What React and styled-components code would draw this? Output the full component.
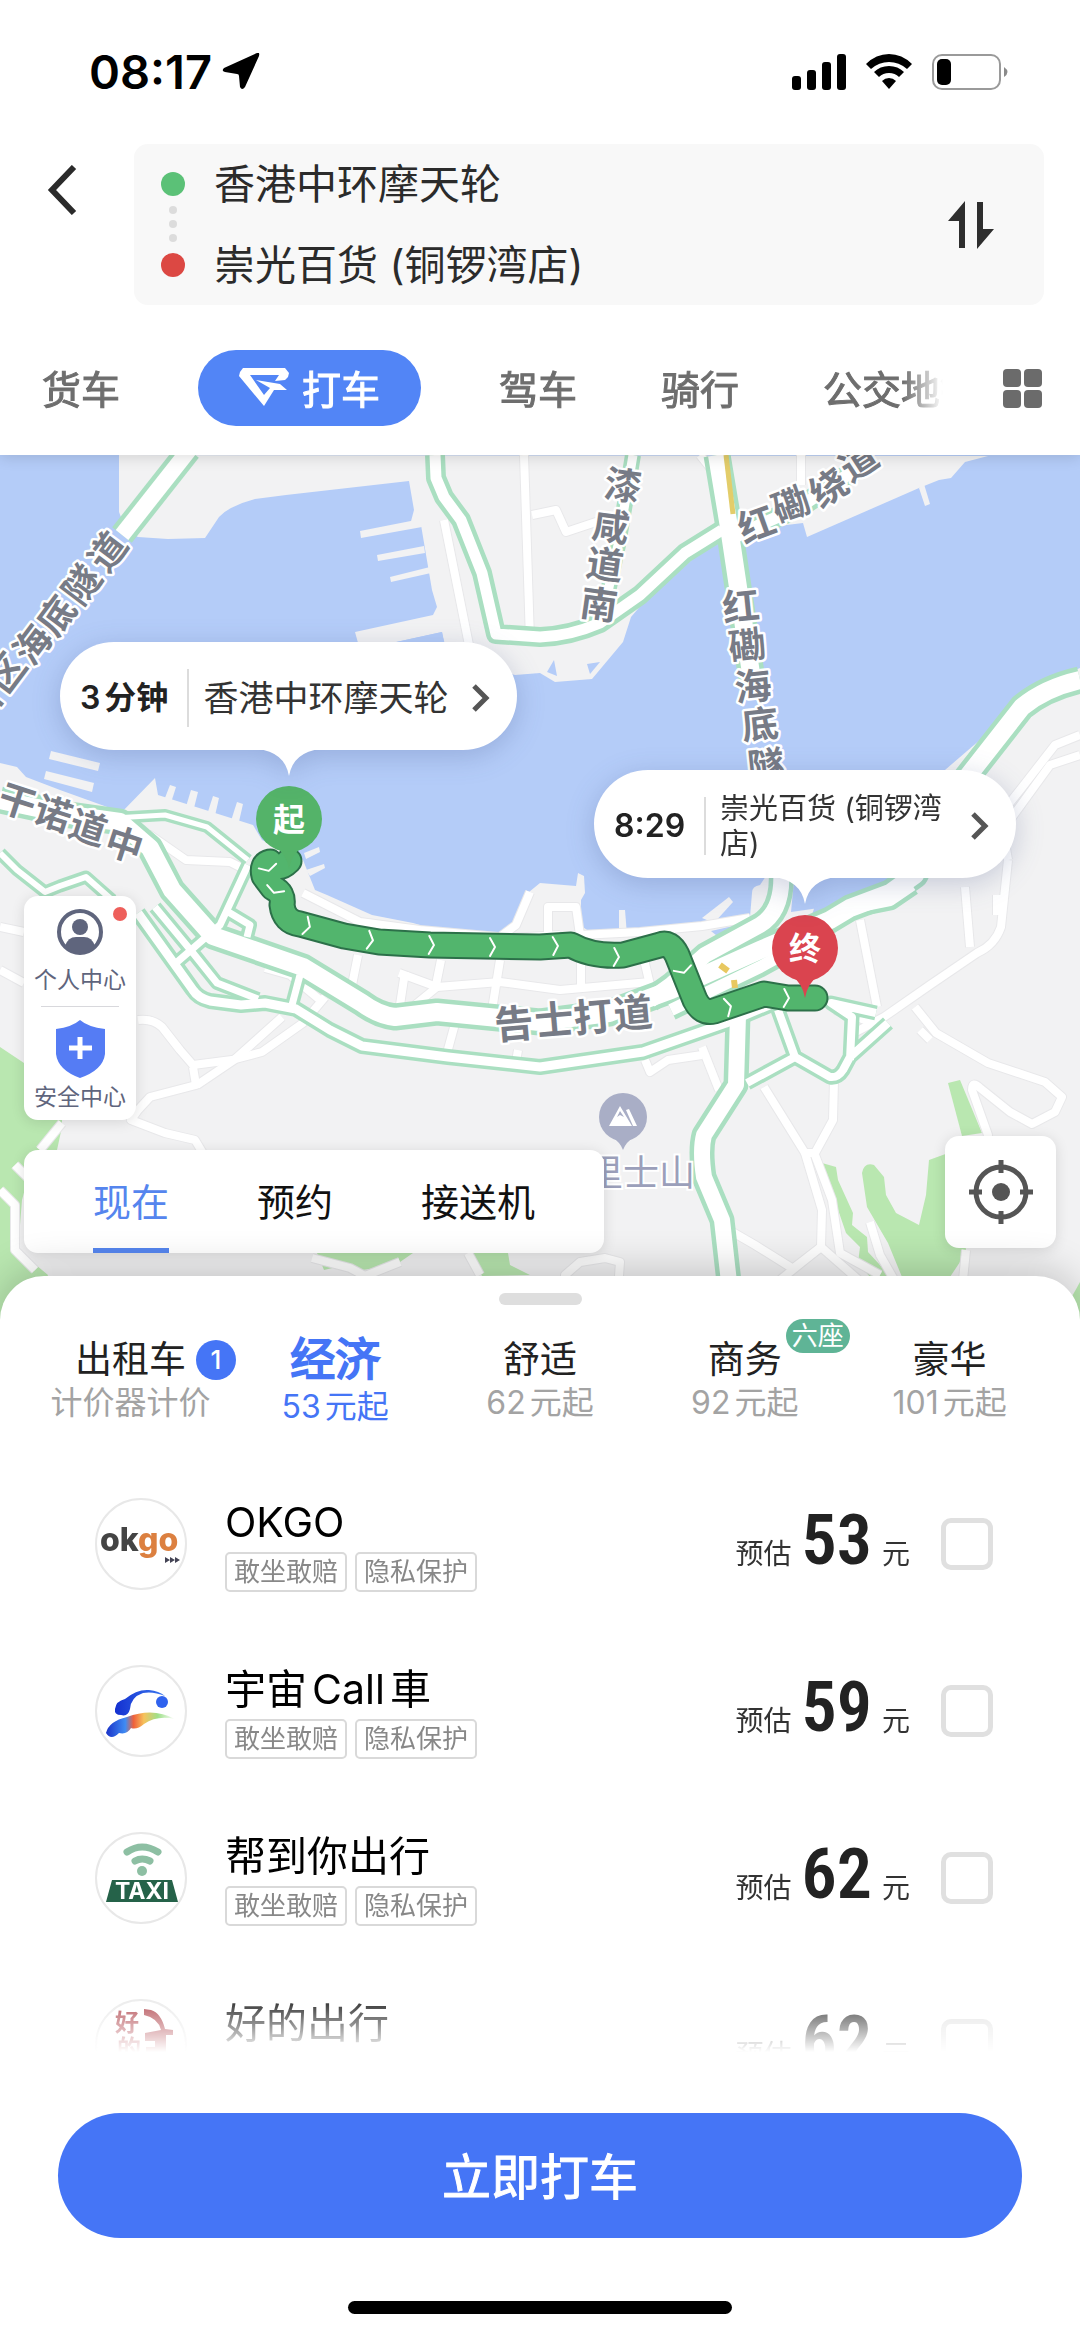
import React, { useState } from 'react'
import styled, { createGlobalStyle } from 'styled-components'

const GlobalStyle = createGlobalStyle`
    * {
        box-sizing : border-box;
    }
    body {
        margin : 0;
        background : #fff;
        font-family : Inter, "Noto Sans CJK SC", sans-serif;
        color : #222;
        text-autospace : normal;
    }
    button {
        border : none;
        background : none;
        padding : 0;
        margin : 0;
        font : inherit;
        color : inherit;
        cursor : pointer;
    }
    svg {
        display : block;
        flex : none;
    }
`

const Page = styled.div`
    min-height : 100vh;
    display : flex;
    flex-direction : column;
    overflow : hidden;
`

/* ---------- 顶部 ---------- */
const Header = styled.header`
    position : relative;
    z-index : 2;
    background : #fff;
    box-shadow : 0 2px 14px rgba(0, 0, 0, 0.14);
`

const StatusBar = styled.div`
    height : 144px;
    padding : 0 72px 0 89px;
    display : flex;
    align-items : center;
    justify-content : space-between;
`

const StatusGroup = styled.div`
    display : flex;
    align-items : center;
    gap : ${(props) => props.$gap}px;
`

const Clock = styled.span`
    font-size : 47px;
    font-weight : 600;
    line-height : 56px;
    color : #000;
`

const SearchRow = styled.div`
    display : flex;
    align-items : flex-start;
    padding : 0 36px 0 40px;
`

const BackButton = styled.button`
    width : 94px;
    height : 92px;
    padding-left : 6px;
    display : flex;
    align-items : center;
`

const SearchBox = styled.div`
    flex : 1;
    display : flex;
    align-items : center;
    background : #f8f8f8;
    border-radius : 14px;
    padding : 0 50px 0 27px;
`

const Stops = styled.div`
    flex : 1;
`

const Stop = styled.div`
    display : flex;
    align-items : center;
    gap : 29px;
    height : 80px;
    font-size : 41px;
    color : #2b2b2b;
`

const StopName = styled.span`
    padding-bottom : 6px;
`

const StopDot = styled.span`
    width : 24px;
    height : 24px;
    border-radius : 50%;
    background : ${(props) => props.$color};
`

const StopGap = styled.div`
    position : relative;
    height : 1px;
    svg {
        position : absolute;
        left : 7px;
        top : -19px;
    }
`

const ModeBar = styled.nav`
    display : flex;
    align-items : center;
    height : 150px;
    padding : 16px 38px 0 36px;
`

const ModeList = styled.div`
    flex : 1;
    display : flex;
    align-items : center;
    gap : 72px;
    overflow : hidden;
    margin-right : 60px;
    mask-image : linear-gradient(to right, #000 calc(100% - 40px), transparent);
`

const Mode = styled.button`
    && {
        flex : none;
        display : flex;
        align-items : center;
        gap : 13px;
        height : 76px;
        padding : 0 ${(props) => (props.$active ? 41 : 6)}px 2px;
        border-radius : 38px;
        font-size : 39px;
        white-space : nowrap;
        color : ${(props) => (props.$active ? '#fff' : '#6e6e6e')};
        background : ${(props) => (props.$active ? '#5285f6' : 'transparent')};
        -webkit-text-stroke : 1px currentColor;
    }
`

/* ---------- 地图 ---------- */
const MapArea = styled.section`
    position : relative;
    height : 866px;
    background : #b4ccf8;
`

const MapSvg = styled.svg`
    position : absolute;
    inset : 0;
    width : 100%;
    height : 100%;
`

const Callout = styled.button`
    && {
        position : absolute;
        left : ${(props) => props.$x}px;
        top : ${(props) => props.$y}px;
        width : ${(props) => props.$w}px;
        height : 108px;
        padding : 4px 26px 0 20px;
        display : flex;
        align-items : center;
        border-radius : 54px;
        background : #fff;
        text-align : left;
        filter : drop-shadow(0 6px 14px rgba(40, 60, 120, 0.22));
    }
`

const CalloutTail = styled.svg`
    position : absolute;
    top : 107px;
    left : ${(props) => props.$left}px;
`

const Eta = styled.span`
    flex : none;
    padding-right : 19px;
    border-right : 2px solid #dcdcdc;
    line-height : 58px;
    font-size : 32px;
    font-weight : 600;
    color : #222;
`

const PlaceName = styled.span`
    flex : 1;
    padding-left : 14px;
    font-size : ${(props) => (props.$small ? 29 : 35)}px;
    line-height : 35px;
    color : #333;
`

const FloatCard = styled.div`
    position : absolute;
    background : #fff;
    border-radius : 14px;
    box-shadow : 0 2px 14px rgba(0, 0, 0, 0.12);
`

const SideCard = styled(FloatCard)`
    left : 24px;
    top : 441px;
    width : 112px;
    padding : 12px 0 6px;
`

const SideItem = styled.button`
    position : relative;
    width : 100%;
    display : flex;
    flex-direction : column;
    align-items : center;
    gap : ${(props) => props.$gap}px;
    && {
        font-size : 23px;
        line-height : 34px;
        color : #5f657d;
    }
`

const SideLine = styled.div`
    height : 1px;
    margin : 9px 17px 13px;
    background : #d8d8dc;
`

const RedDot = styled.span`
    position : absolute;
    top : -1px;
    right : 9px;
    width : 14px;
    height : 14px;
    border-radius : 50%;
    background : #ee5f5b;
`

const TimeCard = styled(FloatCard)`
    left : 24px;
    top : 695px;
    display : flex;
    gap : 88px;
    padding : 0 69px;
`

const TimeTab = styled.button`
    && {
        height : 103px;
        font-size : 38px;
        color : ${(props) => (props.$active ? '#5585ee' : '#111')};
        border-bottom : 5px solid ${(props) => (props.$active ? '#5585ee' : 'transparent')};
    }
`

const LocateButton = styled.button`
    && {
        position : absolute;
        right : 24px;
        top : 681px;
        width : 111px;
        height : 112px;
        display : flex;
        align-items : center;
        justify-content : center;
        background : #fff;
        border-radius : 14px;
        box-shadow : 0 2px 14px rgba(0, 0, 0, 0.12);
    }
`

/* ---------- 车型面板 ---------- */
const Sheet = styled.main`
    position : relative;
    z-index : 1;
    flex : 1;
    display : flex;
    flex-direction : column;
    margin-top : -45px;
    padding-top : 17px;
    background : #fff;
    border-radius : 44px 44px 0 0;
    box-shadow : 0 -6px 40px rgba(0, 0, 0, 0.2);
`

const Handle = styled.div`
    align-self : center;
    width : 83px;
    height : 12px;
    border-radius : 6px;
    background : #dedede;
`

const ClassBar = styled.nav`
    display : grid;
    grid-template-columns : repeat(5, 1fr);
    align-items : center;
    margin-top : 26px;
    padding : 0 28px;
`

const ClassTab = styled.button`
    display : flex;
    flex-direction : column;
    align-items : center;
    && {
        color : ${(props) => (props.$active ? '#4575f6' : '#222')};
    }
`

const ClassName = styled.span`
    position : relative;
    font-size : ${(props) => (props.$active ? 45 : 37)}px;
    line-height : ${(props) => (props.$active ? 58 : 50)}px;
    -webkit-text-stroke : ${(props) => (props.$active ? '2px currentColor' : '0')};
`

const ClassPrice = styled.span`
    font-size : 32px;
    line-height : 36px;
    color : ${(props) => (props.$active ? '#4575f6' : '#a3a3a3')};
`

const CountBadge = styled.span`
    position : absolute;
    left : 100%;
    top : 5px;
    margin-left : 10px;
    width : 40px;
    height : 40px;
    border-radius : 50%;
    background : #4575f6;
    color : #fff;
    font-size : 26px;
    font-weight : 500;
    line-height : 40px;
    text-align : center;
`

const SeatBadge = styled.span`
    position : absolute;
    left : 100%;
    top : -16px;
    margin-left : 4px;
    padding : 0 6px;
    border-radius : 17px;
    background : #5fb496;
    color : #fff;
    font-size : 26px;
    line-height : 34px;
    white-space : nowrap;
`

const CarList = styled.ul`
    list-style : none;
    margin : 35px 0 0;
    padding : 0;
    height : 592px;
    overflow : hidden;
    mask-image : linear-gradient(#000 calc(100% - 64px), transparent);
`

const CarRow = styled.li`
    label {
        display : flex;
        align-items : center;
        height : 167px;
        padding : 0 87px 0 95px;
    }
`

const Logo = styled.span`
    flex : none;
    width : 92px;
    height : 92px;
    border : 2px solid #e8e8e8;
    border-radius : 50%;
    overflow : hidden;
`

const CarInfo = styled.span`
    flex : 1;
    display : flex;
    flex-direction : column;
    padding-left : 38px;
`

const CarName = styled.span`
    margin-bottom : 4px;
    font-size : 41px;
    line-height : 52px;
    color : #000;
`

const TagLine = styled.span`
    display : flex;
    gap : 8px;
`

const Tag = styled.span`
    height : 40px;
    padding : 0 7px;
    border : 2px solid #d9d9d9;
    border-radius : 5px;
    font-size : 26px;
    line-height : 35px;
    color : #888;
`

const Price = styled.span`
    display : flex;
    align-items : baseline;
    padding-bottom : 8px;
    font-size : 28px;
    color : #333;
`

const Amount = styled.span`
    margin : 0 10px;
    font-family : "Roboto Condensed", Roboto, sans-serif;
    font-size : 70px;
    line-height : 84px;
    font-weight : 600;
    color : #222;
`

const Check = styled.input`
    appearance : none;
    flex : none;
    width : 52px;
    height : 52px;
    margin : 0 0 0 31px;
    border : 5px solid #e0e0e0;
    border-radius : 10px;
    background : #fff;
    &:checked {
        background : #4575f6;
        border-color : #4575f6;
    }
`

const SubmitButton = styled.button`
    && {
        height : 125px;
        margin : 61px 58px 63px;
        padding-bottom : 4px;
        border-radius : 63px;
        background : #4575f6;
        color : #fff;
        font-size : 49px;
        -webkit-text-stroke : 1px currentColor;
    }
`

const HomeBar = styled.div`
    align-self : center;
    width : 384px;
    height : 13px;
    margin-bottom : 23px;
    border-radius : 7px;
    background : #000;
`

/* ---------- 地图数据 ---------- */
const LAND = [
    // 九龙
    'M119 455V512L126 530 138 537 168 539 205 538 219 517Q225 511 231 508 243 502 255 499L286 495 409 481 414 510 410 525 421 525 432 590 437 607 433 615 355 632 360 650 442 632 446 655 515 675 540 673 555 682 592 679 623 642 631 617 643 603 722 533 803 523 807 537 919 488 939 480 951 478 965 462 988 456Z',
    // 港岛
    'M0 763L17 767 26 777 60 790 110 808 119 815 155 778 158 795 253 825 262 840 303 860 315 890 327 895 372 915 413 923 444 932 504 933 517 917 529 892 540 883 576 886 578 873 584 876 585 893 581 900 581 923Q583 929 590 931L619 930 702 923 750 917 752 893Q752 886 760 885L770 870 795 870 791 912 840 905 905 880 945 770 988 733 1036 687 1080 668V1330H0Z',
    // 码头
    'M360 531L421 519 422 527 361 538Z', 'M377 555L424 546 425 553 378 561Z', 'M390 577L430 567 431 573 391 582Z',
    'M51 751L100 763 98 771 49 759Z', 'M46 771L94 783 92 792 44 779Z',
    'M170 785L176 787 170 806 163 803Z', 'M191 790L198 792 193 812 185 810Z', 'M213 796L219 798 214 820 206 818Z', 'M237 802L243 804 238 826 230 824Z',
    'M304 853L319 847 320 852 306 859Z', 'M306 870L324 864 325 868 310 876Z',
    'M919 488L925 506 930 504 924 484Z',
    'M702 918L729 897 733 902 714 923Z', 'M619 910H625L627 935H619Z',
]

const WATER = ['M396 642L442 632 445 645Z', 'M547 672L554 660 557 676Z', 'M587 664L600 662 590 674Z', 'M711 931L742 924 746 931 722 940Z', 'M820 890L838 880H905L890 888 860 895 835 910 812 915Z']

const PARKS = [
    'M0 1047L24 1063 62 1100 62 1127 57 1150 30 1170 22 1200 18 1250 48 1275 30 1330H0Z',
    'M948 1083L960 1080 982 1133 962 1136Z',
    'M862 1173Q864 1162 874 1165L884 1177 886 1195 896 1213 919 1225 926 1195 929 1160 962 1148 966 1253 950 1277H902L888 1243 867 1207Z',
    'M822 1163L836 1167 838 1180 853 1213 852 1225 867 1237 868 1252 891 1277H870L858 1263 860 1247 846 1233Z',
    'M317 1253H413L400 1262 377 1268 362 1270 345 1265 324 1270Z',
    'M472 1253H508L510 1265 530 1275 482 1276Z',
    'M1080 1282L1070 1300 1080 1330Z',
]

const LANES = [
    'M0 927L24 932', 'M0 970L24 983', 'M114 840L150 835 186 860 230 862 262 878',
    'M138 1020Q152 1018 162 1027L180 1050 193 1065 232 1060 262 1052 303 1023 325 997',
    'M193 1067L196 1085 150 1097 138 1110 131 1120 165 1133 195 1140 204 1155',
    'M197 1085L234 1060 282 1017', 'M303 893L360 922 420 930 510 938 560 935', 'M530 892L516 925 500 937',
    'M358 955L352 985', 'M441 960L435 990', 'M399 973L437 987 500 982 560 990 650 982', 'M405 972L400 1005', 'M437 987L415 1005',
    'M548 935V907H576L580 935 640 932 702 926 750 918', 'M500 960L492 1010', 'M581 960V985', 'M643 955L650 985', 'M456 1020L447 1053', 'M518 1050L515 1068',
    'M444 520L470 650', 'M524 455L530 640', 'M532 515L556 510 566 532 602 520', 'M801 455V485', 'M700 455L712 470',
    'M1008 860L1001 927Q995 945 977 953L930 985 884 1017 850 1035', 'M965 887L970 947', 'M997 895V915', 'M860 920L877 1007',
    'M915 1007L936 1033 988 1063 1045 1082 1062 1097 1055 1112 1032 1124 1010 1112 980 1088Q972 1080 972 1090L988 1135 975 1200',
    'M930 1040L920 1030', 'M764 1087L805 1153H815L833 1120 834 1080', 'M805 1153L822 1210 821 1247 795 1267', 'M815 1155L832 1200 840 1253 880 1275',
    'M729 1230L755 1245 795 1270', 'M702 1047L719 1090', 'M702 1055L668 1060 650 1072 645 1060', 'M821 1247L870 1290', 'M780 1280L821 1247',
    'M870 1222L880 1255 900 1290', 'M966 1250L962 1290',
    'M312 1258L350 1268 365 1276 400 1262', 'M468 1253L480 1275', 'M565 1290V1275L580 1262 605 1258 620 1262 618 1290',
    'M1080 735L1055 745 1020 790 1000 815 1008 860', 'M1080 755L1050 765 1010 820', 'M62 1123L40 1150', 'M0 1190L15 1205V1250L35 1270',
    'M15 1165L30 1180', 'M835 1010L880 1025', 'M265 968L290 975 320 1000',
]

const ROADS = [
    { w: 12, d: 'M0 853L17 870 45 892 60 886 86 877 112 900' },
    { w: 13, d: 'M155 907L193 953 217 983 258 999M176 963L220 925 248 865 M225 910L250 925 247 937' },
    { w: 13, d: 'M300 975L292 1005' },
    { w: 15, d: 'M138 913L193 990Q198 998 210 1001L241 1005 265 1003 296 1009 330 1030 362 1046 448 1057 540 1067 643 1052 726 1023 774 1003' },
    { w: 11, d: 'M114 818L165 815 207 827 248 860' },
    { w: 14, d: 'M747 1083L795 1057 778 1010M795 1057L830 1077Q838 1078 843 1070L850 1057 888 1023M850 1060L852 1017 831 1003 876 1013' },
    { w: 24, d: 'M738 1015L736 1085 704 1135Q700 1150 704 1177L722 1220 731 1300' },
    { w: 24, d: 'M781 870Q784 910 760 925L705 955 671 985 650 1000' },
    { w: 20, d: 'M671 1010L760 967 800 945 850 908 890 900 912 885' },
    { w: 26, d: 'M0 800L70 815 120 822 150 848 172 890 213 936 303 967 362 1003Q378 1015 395 1017L437 1012 540 1022 609 1013 671 990 760 950 830 920 850 908 890 893 915 875 957 790 1022 707Q1045 688 1080 680' },
    { w: 19, d: 'M435 455L436 478 444 497 461 520 482 573 496 634 540 637Q570 636 600 623L640 595 685 553 722 530' },
    { w: 15, d: 'M633 455L618 545 602 620' },
    { w: 20, d: 'M729 540L764 523 800 507 870 460' },
    { w: 26, d: 'M717 455L729 527 738 587 752 680' },
    { w: 24, d: 'M189 450L122 535' },
]

const ROUTE = 'M289 861Q278 872 270 862 261 864 264 876L273 888Q284 893 282 905 284 922 300 924L344 936 379 942 430 945 540 947 571 945Q592 957 623 955L660 945Q670 941 677 955L695 1000Q702 1014 714 1011L764 994 788 998H815'

const ARROWS = [
    [268, 868, 75], [275, 890, 110], [307, 926, 17], [370, 940, 8], [431, 945, 2], [492, 947, 0], [555, 946, -2], [616, 957, 2], [683, 970, 72], [728, 1007, -14], [786, 998, 2],
]

// 每个字单独定位，沿道路旋转
const ROAD_NAMES = [
    { angle: -53, size: 37, chars: [['西', -18, 706], ['区', 7, 673], ['海', 33, 645], ['底', 57, 616], ['隧', 82, 585], ['道', 108, 552]] },
    { angle: 18, size: 37, chars: [['干', 17, 802], ['诺', 53, 814], ['道', 88, 828], ['中', 124, 845]] },
    { angle: 8, size: 37, chars: [['漆', 623, 486], ['咸', 611, 527], ['道', 605, 565], ['南', 599, 605]] },
    { angle: -20, size: 37, chars: [['红', 757, 525], ['磡', 791, 505]] },
    { angle: -33, size: 37, chars: [['绕', 829, 488], ['道', 859, 462]] },
    { angle: -6, size: 37, chars: [['红', 741, 607], ['磡', 747, 646], ['海', 753, 687], ['底', 760, 725], ['隧', 766, 766]] },
    { angle: -5, size: 39, chars: [['告', 514, 1025], ['士', 554, 1021], ['打', 593, 1018], ['道', 633, 1014]] },
]

const MODES = ['货车', '打车', '驾车', '骑行', '公交地铁']
const TIMES = ['现在', '预约', '接送机']

const CLASSES = [
    { name: '出租车', price: '计价器计价', count: 1 },
    { name: '经济', price: '53元起' },
    { name: '舒适', price: '62元起' },
    { name: '商务', price: '92元起', seat: '六座' },
    { name: '豪华', price: '101元起' },
]

/* ---------- 标志 ---------- */
const OkgoLogo = () => (
    <svg width="88" height="88" viewBox="0 0 88 88">
        <text x="3" y="51" fontFamily="Inter, sans-serif" fontSize="32" fontWeight="800" fill="#444">ok<tspan fill="#dc8040">go</tspan></text>
        <path d="M68 57l5 3-5 3zM73 57l5 3-5 3zM78 57l5 3-5 3z" fill="#445" />
    </svg>
)

const CallLogo = () => (
    <svg width="88" height="88" viewBox="0 0 88 88">
        <defs>
            <linearGradient id="callTail" x1="0" x2="1">
                <stop offset="0" stopColor="#1a32c8" />
                <stop offset="0.28" stopColor="#3f8cf4" />
                <stop offset="0.4" stopColor="#f0603a" />
                <stop offset="0.55" stopColor="#f6c25c" />
                <stop offset="0.75" stopColor="#9fe08a" />
                <stop offset="1" stopColor="#fff" />
            </linearGradient>
            <linearGradient id="callArc" x1="0" x2="1">
                <stop offset="0" stopColor="#1430d0" />
                <stop offset="1" stopColor="#3a78f0" />
            </linearGradient>
        </defs>
        <path d="M18 42Q19 34 28 32 40 22 52 23 62 24 68 29 56 24 46 26 34 30 33 42 31 50 24 48 17 48 18 42Z" fill="url(#callArc)" />
        <circle cx="65" cy="35" r="6" fill="#2f62ee" />
        <path d="M9 66Q12 54 30 50 56 40 78 52 60 48 47 57 40 63 34 61 30 68 22 66 14 74 9 66Z" fill="url(#callTail)" />
    </svg>
)

const TaxiLogo = () => (
    <svg width="88" height="88" viewBox="0 0 88 88">
        <g fill="none" stroke="#8dbfa3" strokeLinecap="round" strokeWidth="7">
            <path d="M30 18Q45 8 61 18" />
            <path d="M38 27Q45 23 53 27" />
        </g>
        <circle cx="45" cy="37" r="5" fill="#8dbfa3" />
        <path d="M15 46H75L81 68H9Z" fill="#256249" />
        <text x="45" y="65" textAnchor="middle" fontFamily="Inter, sans-serif" fontSize="23" fontWeight="700" fill="#fff">TAXI</text>
    </svg>
)

const HaodeLogo = () => (
    <svg width="88" height="88" viewBox="0 0 88 88" fill="#a8323a">
        <text x="18" y="30" fontFamily="Noto Sans CJK SC, sans-serif" fontSize="24" fontWeight="700">好</text>
        <text x="20" y="56" fontFamily="Noto Sans CJK SC, sans-serif" fontSize="24" fontWeight="700">的</text>
        <path d="M47 8L54 9Q64 12 68 28L76 29V34H69V60H49V46H58V40H48V32L64 29Q61 17 47 14Z" />
    </svg>
)

const CARS = [
    { name: 'OKGO', price: 53, logo: <OkgoLogo /> },
    { name: '宇宙Call車', price: 59, logo: <CallLogo /> },
    { name: '帮到你出行', price: 62, logo: <TaxiLogo /> },
    { name: '好的出行', price: 62, logo: <HaodeLogo /> },
]

const Chevron = () => (
    <svg width="20" height="28" viewBox="0 0 20 28" fill="none" stroke="#555" strokeWidth="5">
        <path d="M3 2L15 14 3 26" />
    </svg>
)

const Tail = ({ left }) => (
    <CalloutTail $left={left} width="64" height="27" viewBox="0 0 64 27">
        <path d="M0 0H64Q36 3 32 27 28 3 0 0Z" fill="#fff" />
    </CalloutTail>
)

const Marker = ({ x, y, color, text }) => (
    <g>
        <path d={`M${x - 14} ${y + 28}Q${x - 3} ${y + 34} ${x} ${y + 50}Q${x + 3} ${y + 34} ${x + 14} ${y + 28}Z`} fill={color} />
        <circle cx={x} cy={y} r="33" fill={color} />
        <text x={x} y={y + 12} textAnchor="middle" fontSize="32" fontWeight="700" fill="#fff">{text}</text>
    </g>
)

function CityMap() {
    return (
        <MapSvg viewBox="0 455 1080 866" preserveAspectRatio="xMidYMin slice">
            {LAND.map((d) => <path key={d} d={d} fill="#f2f2f3" />)}
            {WATER.map((d) => <path key={d} d={d} fill="#b4ccf8" />)}
            {PARKS.map((d) => <path key={d} d={d} fill="#b9e7b0" />)}
            <g fill="none" strokeLinejoin="round">
                {LANES.map((d) => <path key={d} d={d} stroke="#e8e8ea" strokeWidth="10" />)}
                {LANES.map((d) => <path key={d} d={d} stroke="#fff" strokeWidth="8" />)}
                {ROADS.map((r) => <path key={r.d} d={r.d} stroke="#aadfc1" strokeWidth={r.w + 1} />)}
                {ROADS.map((r) => <path key={r.d} d={r.d} stroke="#fff" strokeWidth={r.w > 18 ? r.w - 8 : r.w - 6} />)}
                <path d="M726 455L733 514" stroke="#e3cd6a" strokeWidth="5" />
                <path d="M720 965L728 971M734 980L735 988" stroke="#e8c860" strokeWidth="6" />
            </g>
            <g fontWeight="700" textAnchor="middle" fill="#777b86" stroke="#fff" strokeWidth="5" strokeLinejoin="round" paintOrder="stroke">
                {ROAD_NAMES.map((road) =>
                    road.chars.map(([ch, x, y]) => (
                        <text key={`${ch}${x}`} fontSize={road.size} transform={`translate(${x} ${y}) rotate(${road.angle})`} y="13">{ch}</text>
                    ))
                )}
            </g>
            {/* 山峰 */}
            <path d="M613 1138Q620 1142 623 1150 626 1142 633 1138Z" fill="#a9aec6" />
            <circle cx="623" cy="1117" r="24" fill="#a9aec6" />
            <path d="M609 1126L620 1106 632 1126ZM626 1110L629 1109 637 1126H633Z" fill="#fff" />
            <path d="M617 1117L620 1111 624 1117 620 1115Z" fill="#a9aec6" />
            <text x="587" y="1186" fontSize="36" fill="#9b9fba" stroke="#fff" strokeWidth="4" paintOrder="stroke">里士山</text>
            {/* 路线 */}
            <g fill="none" strokeLinejoin="round" strokeLinecap="round">
                <path d={ROUTE} stroke="#2c7049" strokeWidth="27" />
                <path d={ROUTE} stroke="#52b56d" strokeWidth="23" />
                <g stroke="#fff" strokeWidth="2">
                    {ARROWS.map(([x, y, a]) => <path key={x} d="M-2 -9L3 0 -2 9" transform={`translate(${x} ${y}) rotate(${a})`} />)}
                </g>
            </g>
            <Marker x={289} y={819} color="#54b369" text="起" />
            <Marker x={805} y={948} color="#da444f" text="终" />
        </MapSvg>
    )
}

function App() {
    const [mode, setMode] = useState(1)
    const [time, setTime] = useState(0)
    const [carClass, setCarClass] = useState(1)

    return (
        <Page>
            <GlobalStyle />
            <Header>
                <StatusBar>
                    <StatusGroup $gap={10}>
                        <Clock>08:17</Clock>
                        <svg width="38" height="38" viewBox="0 0 38 38"><path d="M35 0Q38 -1 37 3L23 34Q20 38 18 34L17 23Q17 21 15 21L3 19Q-1 18 2 15Z" fill="#000" /></svg>
                    </StatusGroup>
                    <StatusGroup $gap={20}>
                        <svg width="54" height="36" viewBox="0 0 54 36">
                            <rect x="0" y="22" width="9" height="14" rx="3" />
                            <rect x="15" y="16" width="9" height="20" rx="3" />
                            <rect x="30" y="8" width="9" height="28" rx="3" />
                            <rect x="45" y="0" width="9" height="36" rx="3" />
                        </svg>
                        <svg width="46" height="36" viewBox="0 0 46 36">
                            <path d="M23 0Q36 0 46 10L41 15Q33 8 23 8 13 8 5 15L0 10Q10 0 23 0Z" />
                            <path d="M23 12Q32 12 38 18L33 23Q29 19 23 19 17 19 13 23L8 18Q14 12 23 12Z" />
                            <path d="M23 24Q27 24 30 27L23 35 16 27Q19 24 23 24Z" />
                        </svg>
                        <svg width="76" height="36" viewBox="0 0 76 36">
                            <rect x="1" y="1" width="67" height="34" rx="9" fill="none" stroke="#9a9a9a" strokeWidth="2" />
                            <rect x="5" y="5" width="14" height="26" rx="5" />
                            <path d="M72 13Q79 18 72 23Z" fill="#8a8a8a" />
                        </svg>
                    </StatusGroup>
                </StatusBar>
                <SearchRow>
                    <BackButton aria-label="返回">
                        <svg width="32" height="50" viewBox="0 0 32 50" fill="none" stroke="#2b2b2b" strokeWidth="6"><path d="M28 2L6 25 28 48" /></svg>
                    </BackButton>
                    <SearchBox>
                        <Stops>
                            <Stop><StopDot $color="#5bc177" /><StopName>香港中环摩天轮</StopName></Stop>
                            <StopGap>
                                <svg width="10" height="40" viewBox="0 0 10 40" fill="#dcdcdc"><circle cx="5" cy="5" r="4" /><circle cx="5" cy="19" r="4" /><circle cx="5" cy="33" r="4" /></svg>
                            </StopGap>
                            <Stop><StopDot $color="#dc4843" /><StopName>崇光百货 (铜锣湾店)</StopName></Stop>
                        </Stops>
                        <button aria-label="交换起终点">
                            <svg width="46" height="48" viewBox="0 0 46 48" fill="#2e2e2e"><path d="M17 0V47H11V20H0ZM29 1H35V28H46L29 48Z" /></svg>
                        </button>
                    </SearchBox>
                </SearchRow>
                <ModeBar>
                    <ModeList>
                        {MODES.map((name, i) => (
                            <Mode key={name} $active={i === mode} onClick={() => setMode(i)}>
                                {i === 1 && (
                                    <svg width="50" height="38" viewBox="0 0 50 38" fill="currentColor">
                                        <path d="M4 0H46L50 5 49 9 46 12 36 13 40 7H11L25 27 31 20 17 12 41 16 48 22 35 22 25 38 0 8 1 4Z" />
                                    </svg>
                                )}
                                {name}
                            </Mode>
                        ))}
                    </ModeList>
                    <button aria-label="更多">
                        <svg width="39" height="39" viewBox="0 0 39 39" fill="#6b6b6b">
                            <rect width="18" height="18" rx="4" /><rect x="21" width="18" height="18" rx="4" />
                            <rect y="21" width="18" height="18" rx="4" /><rect x="21" y="21" width="18" height="18" rx="4" />
                        </svg>
                    </button>
                </ModeBar>
            </Header>

            <MapArea>
                <CityMap />
                <Callout $x={60} $y={187} $w={457}>
                    <Eta>3分钟</Eta>
                    <PlaceName>香港中环摩天轮</PlaceName>
                    <Chevron />
                    <Tail left={197} />
                </Callout>
                <Callout $x={594} $y={315} $w={422}>
                    <Eta>8:29</Eta>
                    <PlaceName $small>崇光百货 (铜锣湾店)</PlaceName>
                    <Chevron />
                    <Tail left={179} />
                </Callout>
                <SideCard>
                    <SideItem $gap={7}>
                        <svg width="48" height="48" viewBox="0 0 48 48">
                            <circle cx="24" cy="24" r="21" fill="none" stroke="#5f657d" strokeWidth="4" />
                            <circle cx="24" cy="19" r="8" fill="#5f657d" />
                            <path d="M9 38Q12 29 20 29H28Q36 29 39 38 33 45 24 45 15 45 9 38Z" fill="#5f657d" />
                        </svg>
                        个人中心
                        <RedDot />
                    </SideItem>
                    <SideLine />
                    <SideItem $gap={2}>
                        <svg width="49" height="58" viewBox="0 0 49 58">
                            <path d="M24 0Q32 7 49 9V34Q47 50 24 58 2 50 0 34V9Q16 7 24 0Z" fill="#557cf4" />
                            <path d="M24 17V39M13 28H36" stroke="#fff" strokeWidth="5" />
                        </svg>
                        安全中心
                    </SideItem>
                </SideCard>
                <TimeCard>
                    {TIMES.map((name, i) => (
                        <TimeTab key={name} $active={i === time} onClick={() => setTime(i)}>{name}</TimeTab>
                    ))}
                </TimeCard>
                <LocateButton aria-label="定位">
                    <svg width="64" height="64" viewBox="0 0 64 64" fill="none" stroke="#555" strokeWidth="5">
                        <circle cx="32" cy="32" r="25" />
                        <circle cx="32" cy="32" r="9" fill="#555" stroke="none" />
                        <path d="M32 0V13M32 51V64M0 32H13M51 32H64" />
                    </svg>
                </LocateButton>
            </MapArea>

            <Sheet>
                <Handle />
                <ClassBar>
                    {CLASSES.map((item, i) => (
                        <ClassTab key={item.name} $active={i === carClass} onClick={() => setCarClass(i)}>
                            <ClassName $active={i === carClass}>
                                {item.name}
                                {item.count && <CountBadge>{item.count}</CountBadge>}
                                {item.seat && <SeatBadge>{item.seat}</SeatBadge>}
                            </ClassName>
                            <ClassPrice $active={i === carClass}>{item.price}</ClassPrice>
                        </ClassTab>
                    ))}
                </ClassBar>
                <CarList>
                    {CARS.map((car) => (
                        <CarRow key={car.name}>
                            <label>
                                <Logo>{car.logo}</Logo>
                                <CarInfo>
                                    <CarName>{car.name}</CarName>
                                    <TagLine>
                                        <Tag>敢坐敢赔</Tag>
                                        <Tag>隐私保护</Tag>
                                    </TagLine>
                                </CarInfo>
                                <Price>预估<Amount>{car.price}</Amount>元</Price>
                                <Check type="checkbox" />
                            </label>
                        </CarRow>
                    ))}
                </CarList>
                <SubmitButton>立即打车</SubmitButton>
                <HomeBar />
            </Sheet>
        </Page>
    )
}

export default App
